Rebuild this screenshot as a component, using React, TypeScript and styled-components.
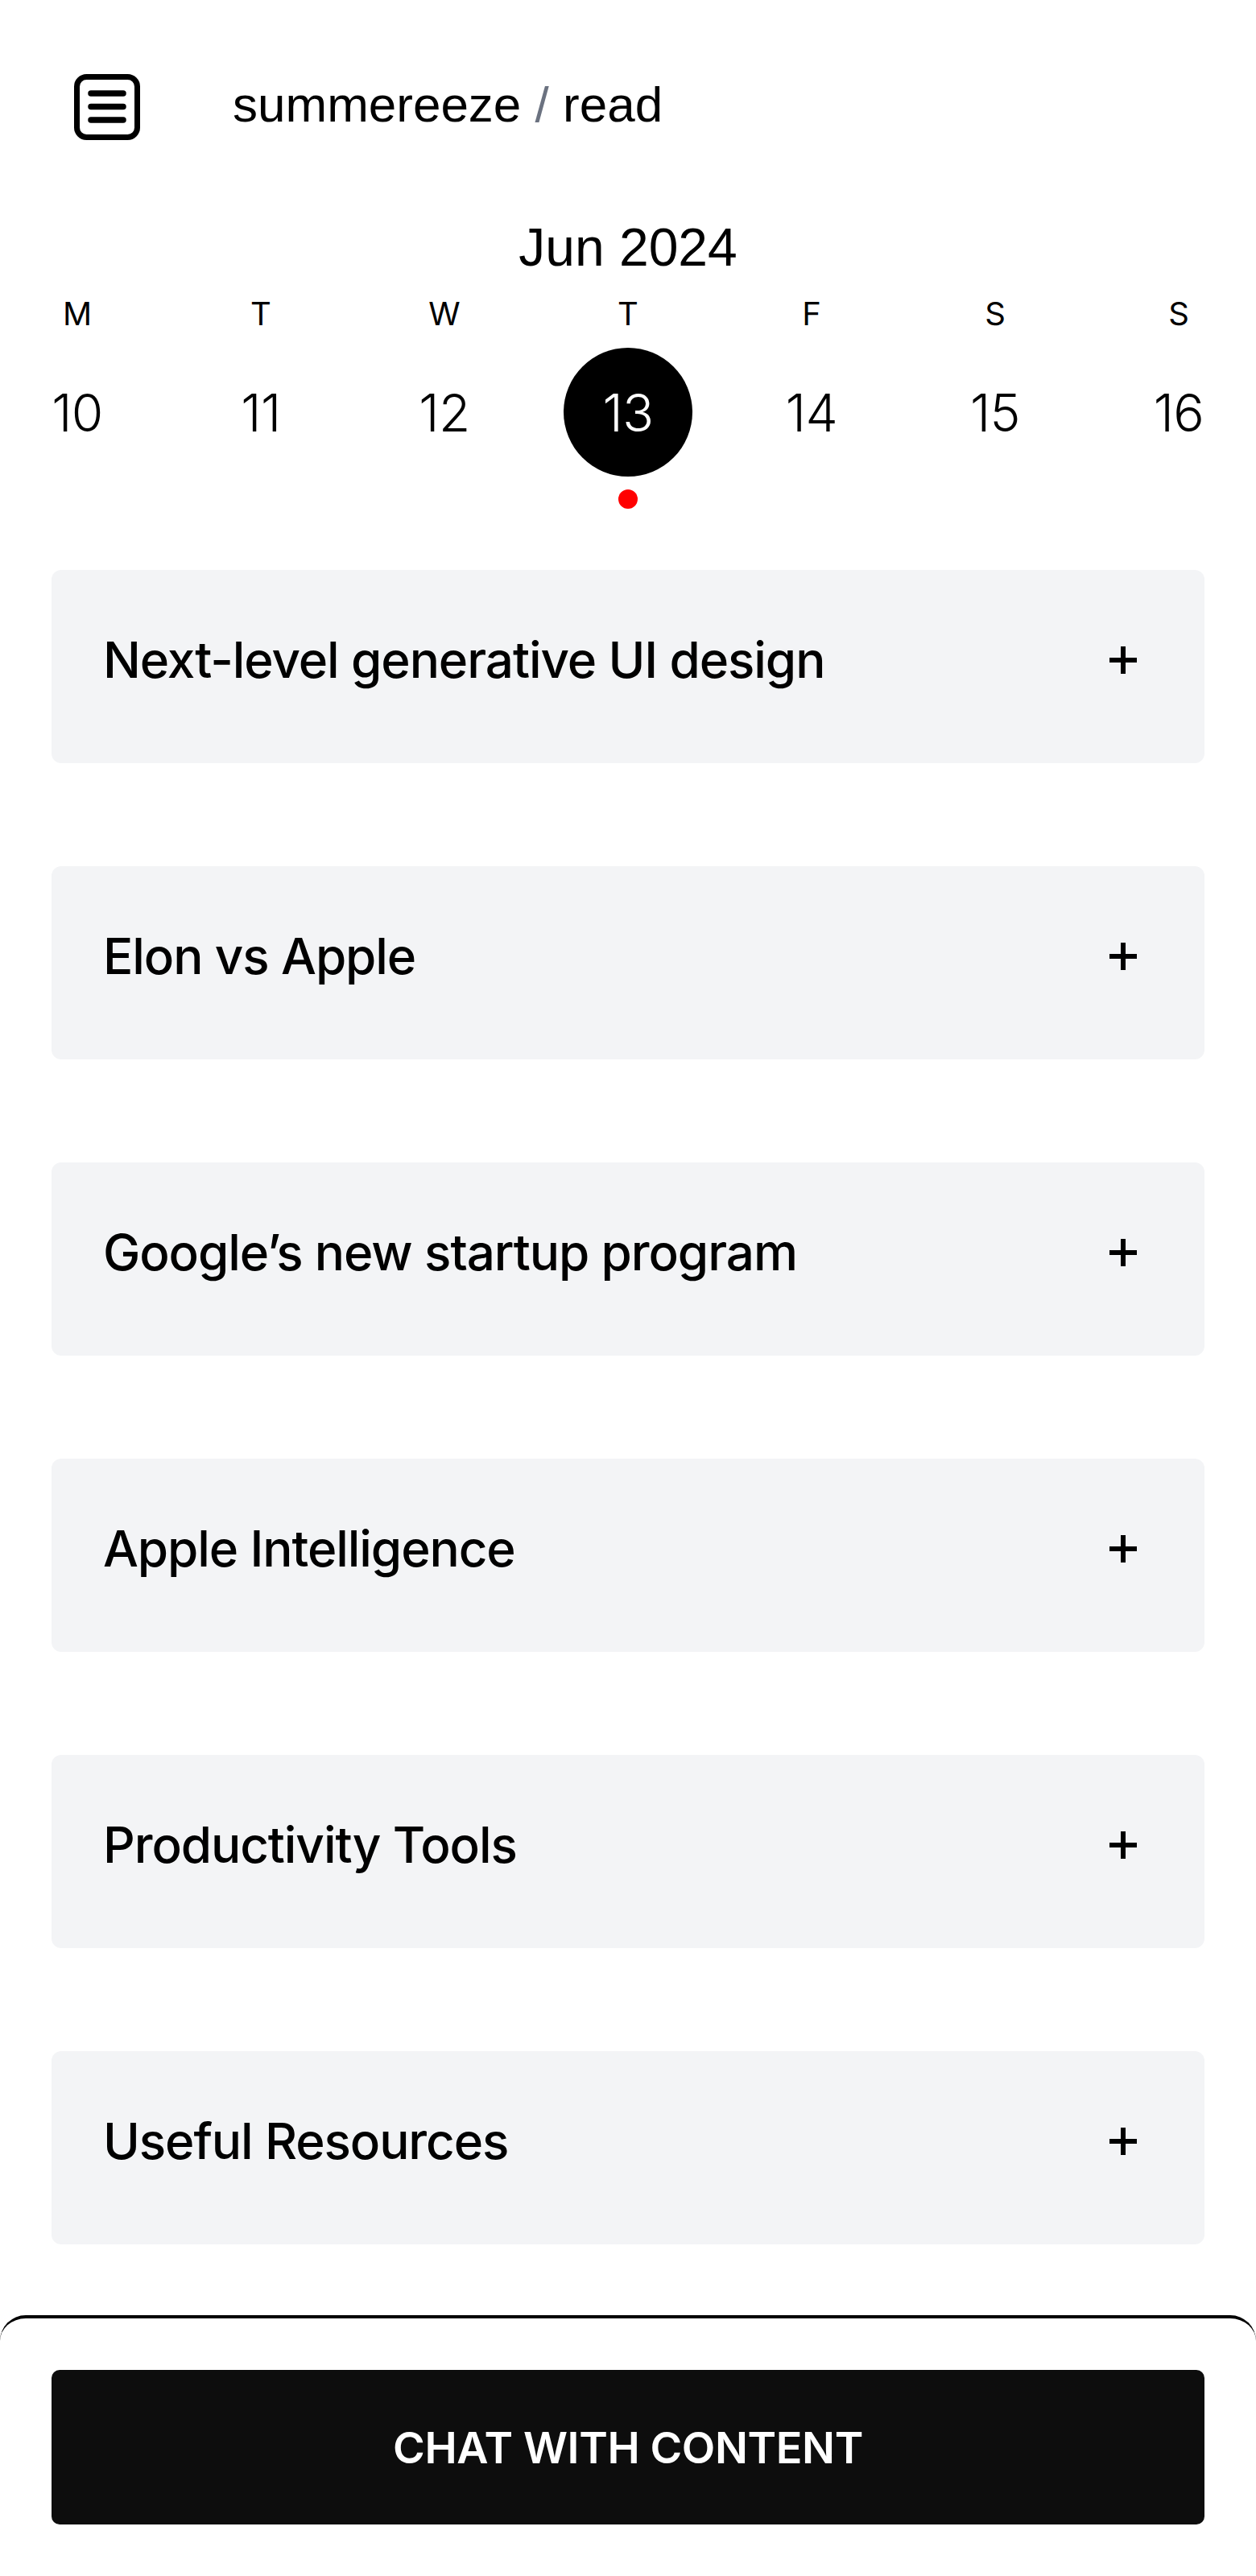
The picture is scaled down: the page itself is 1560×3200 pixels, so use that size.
import React from "react";
import styled, { createGlobalStyle } from "styled-components";

const GlobalStyle = createGlobalStyle`
  html, body { margin: 0; padding: 0; background: #ffffff; }
  body { font-family: "Inter", "Liberation Sans", sans-serif; color: #000; }
  * { box-sizing: border-box; }
`;

const Page = styled.div`
  width: 1560px;
  display: flex;
  flex-direction: column;
  padding-top: 92px;
`;

const Header = styled.header`
  display: flex;
  align-items: center;
  gap: 115px;
  padding-left: 92px;
  height: 82px;
`;

const MenuButton = styled.button`
  width: 82px;
  height: 82px;
  padding: 0;
  border: none;
  background: transparent;
  display: flex;
  cursor: pointer;
`;

const Breadcrumb = styled.div`
  font-family: "Liberation Sans", Arial, sans-serif;
  font-size: 62px;
  line-height: 1;
  padding-bottom: 6px;
  color: #000;
`;

const Slash = styled.span`
  color: #6b7280;
`;

const MonthTitle = styled.h2`
  margin: 100px 0 0;
  font-family: "Liberation Sans", Arial, sans-serif;
  font-weight: 400;
  font-size: 66px;
  line-height: 66px;
  text-align: center;
`;

const WeekRow = styled.div`
  display: flex;
  justify-content: space-between;
  padding: 0 16px;
`;

const DayLetters = styled(WeekRow)`
  margin-top: 30px;
`;

const DayLetter = styled.div`
  width: 160px;
  text-align: center;
  font-family: "Inter", sans-serif;
  font-size: 40px;
  line-height: 40px;
  font-weight: 400;
`;

const DatesRow = styled(WeekRow)`
  margin-top: 22px;
`;

const DateCell = styled.div`
  width: 160px;
  display: flex;
  flex-direction: column;
  align-items: center;
`;

const DateCircle = styled.div<{ $active?: boolean }>`
  width: 160px;
  height: 160px;
  border-radius: 50%;
  display: flex;
  align-items: center;
  justify-content: center;
  background: ${(p) => (p.$active ? "#000" : "transparent")};
  color: ${(p) => (p.$active ? "#fff" : "#000")};
  font-family: "Inter", sans-serif;
  font-weight: 300;
  font-size: 64px;
  letter-spacing: -0.5px;
`;

const Dot = styled.div<{ $visible?: boolean }>`
  width: 24px;
  height: 24px;
  margin-top: 16px;
  border-radius: 50%;
  background: ${(p) => (p.$visible ? "#ff0000" : "transparent")};
`;

const CardList = styled.div`
  margin-top: 76px;
  padding: 0 64px;
  display: flex;
  flex-direction: column;
  gap: 128px;
`;

const Card = styled.div`
  height: 240px;
  background: #f3f4f6;
  border-radius: 12px;
  display: flex;
  align-items: center;
  justify-content: space-between;
  padding: 0 84px 16px 64px;
`;

const CardTitle = styled.h3`
  margin: 0;
  font-family: "Inter", sans-serif;
  font-weight: 500;
  font-size: 62px;
  letter-spacing: -1.1px;
  line-height: 1.2;
`;

const PlusIcon = styled.svg`
  width: 34px;
  height: 34px;
  flex-shrink: 0;
`;

const BottomBar = styled.div`
  margin-top: 88px;
  border-top: 4px solid #000;
  border-radius: 32px 32px 0 0;
  background: #fff;
  padding: 64px 64px 64px;
`;

const ChatButton = styled.button`
  width: 100%;
  height: 192px;
  border: none;
  border-radius: 10px;
  background: #0d0d0d;
  color: #fff;
  font-family: "Inter", sans-serif;
  font-weight: 600;
  font-size: 54px;
  letter-spacing: -0.4px;
  cursor: pointer;
`;

const days = [
  { l: "M", d: 10 },
  { l: "T", d: 11 },
  { l: "W", d: 12 },
  { l: "T", d: 13 },
  { l: "F", d: 14 },
  { l: "S", d: 15 },
  { l: "S", d: 16 },
];

const topics = [
  "Next-level generative UI design",
  "Elon vs Apple",
  "Google’s new startup program",
  "Apple Intelligence",
  "Productivity Tools",
  "Useful Resources",
];

const MenuIcon = () => (
  <svg width="82" height="82" viewBox="0 0 82 82" fill="none">
    <rect x="3.5" y="3.5" width="75" height="75" rx="12" stroke="#000" strokeWidth="7" />
    <path d="M21 24H61M21 40.5H61M21 57H61" stroke="#000" strokeWidth="7.5" strokeLinecap="round" />
  </svg>
);

export default function App() {
  return (
    <>
      <GlobalStyle />
      <Page>
        <Header>
          <MenuButton aria-label="menu">
            <MenuIcon />
          </MenuButton>
          <Breadcrumb>
            summereeze <Slash>/</Slash> read
          </Breadcrumb>
        </Header>

        <MonthTitle>Jun 2024</MonthTitle>

        <DayLetters>
          {days.map((d, i) => (
            <DayLetter key={i}>{d.l}</DayLetter>
          ))}
        </DayLetters>

        <DatesRow>
          {days.map((d) => (
            <DateCell key={d.d}>
              <DateCircle $active={d.d === 13}>{d.d}</DateCircle>
              <Dot $visible={d.d === 13} />
            </DateCell>
          ))}
        </DatesRow>

        <CardList>
          {topics.map((t) => (
            <Card key={t}>
              <CardTitle>{t}</CardTitle>
              <PlusIcon viewBox="0 0 34 34" fill="none">
                <path d="M17 0V34M0 17H34" stroke="#000" strokeWidth="6" />
              </PlusIcon>
            </Card>
          ))}
        </CardList>

        <BottomBar>
          <ChatButton>CHAT WITH CONTENT</ChatButton>
        </BottomBar>
      </Page>
    </>
  );
}
